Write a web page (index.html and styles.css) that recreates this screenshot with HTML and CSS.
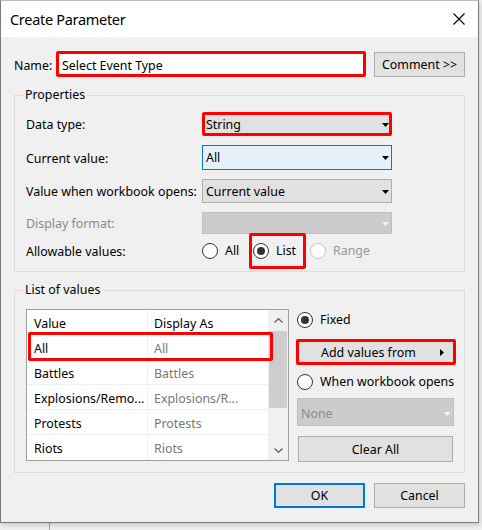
FILE: index.html
```html
<!DOCTYPE html>
<html>
<head>
<meta charset="utf-8">
<link rel="stylesheet" href="styles.css">
</head>
<body>
<div class="window">
  <div class="titlebar">
    <span class="title">Create Parameter</span>
    <svg class="close" width="12" height="12" viewBox="0 0 12 12"><path d="M0.5 0.5 L11.5 11.5 M11.5 0.5 L0.5 11.5" stroke="#000" stroke-width="1.1" fill="none"/></svg>
  </div>
  <div class="body">
    <div class="name-row">
      <span class="name-label">Name:</span>
      <div class="name-input">Select Event Type</div>
      <button class="btn comment">Comment &gt;&gt;</button>
    </div>

    <fieldset class="group props">
      <legend>Properties</legend>
      <div class="prop-grid">
        <span>Data type:</span>
        <div class="select hl"><span>String</span><svg class="arrow" width="7" height="4" viewBox="0 0 7 4"><path d="M0 0 H7 L3.5 4 Z" fill="#000"/></svg></div>

        <span>Current value:</span>
        <div class="select focus"><span>All</span><svg class="arrow" width="7" height="4" viewBox="0 0 7 4"><path d="M0 0 H7 L3.5 4 Z" fill="#000"/></svg></div>

        <span>Value when workbook opens:</span>
        <div class="select"><span>Current value</span><svg class="arrow" width="7" height="4" viewBox="0 0 7 4"><path d="M0 0 H7 L3.5 4 Z" fill="#000"/></svg></div>

        <span class="disabled-text">Display format:</span>
        <div class="select disabled"><span></span><svg class="arrow" width="7" height="4" viewBox="0 0 7 4"><path d="M0 0 H7 L3.5 4 Z" fill="#f4f4f4"/></svg></div>

        <span>Allowable values:</span>
        <div class="radios">
          <label class="radio r-all"><span class="circle"></span>All</label>
          <label class="radio r-list"><span class="circle checked"></span>List</label>
          <label class="radio disabled"><span class="circle"></span>Range</label>
        </div>
      </div>
    </fieldset>

    <fieldset class="group listgroup">
      <legend>List of values</legend>
      <div class="list-layout">
        <div class="table">
          <div class="cols">
            <div class="cell c1">Value</div><div class="cell c2 head">Display As</div>
            <div class="cell c1">All</div><div class="cell c2">All</div>
            <div class="cell c1">Battles</div><div class="cell c2">Battles</div>
            <div class="cell c1">Explosions/Remo...</div><div class="cell c2">Explosions/R...</div>
            <div class="cell c1">Protests</div><div class="cell c2">Protests</div>
            <div class="cell c1 last">Riots</div><div class="cell c2 last">Riots</div>
          </div>
          <div class="scrollbar">
            <div class="sb-btn"><svg width="9" height="5" viewBox="0 0 9 5"><path d="M0.5 4.5 L4.5 0.7 L8.5 4.5" stroke="#606060" stroke-width="1.3" fill="none"/></svg></div>
            <div class="sb-track"><div class="thumb"></div></div>
            <div class="sb-btn"><svg width="9" height="5" viewBox="0 0 9 5"><path d="M0.5 0.5 L4.5 4.3 L8.5 0.5" stroke="#606060" stroke-width="1.3" fill="none"/></svg></div>
          </div>
          <div class="row-hl"></div>
        </div>

        <div class="side">
          <label class="radio fixed"><span class="circle checked"></span>Fixed</label>
          <button class="btn add"><span>Add values from</span><svg width="4" height="7" viewBox="0 0 4 7"><path d="M0 0 L4 3.5 L0 7 Z" fill="#000"/></svg></button>
          <label class="radio wwo"><span class="circle"></span>When workbook opens</label>
          <div class="select disabled none"><span>None</span><svg class="arrow" width="7" height="4" viewBox="0 0 7 4"><path d="M0 0 H7 L3.5 4 Z" fill="#f4f4f4"/></svg></div>
          <button class="btn clear">Clear All</button>
        </div>
      </div>
    </fieldset>

    <div class="footer">
      <button class="btn ok">OK</button>
      <button class="btn">Cancel</button>
    </div>
  </div>
</div>
</body>
</html>
```

FILE: styles.css
```css
*, *::before, *::after { box-sizing: border-box; }
html, body { margin: 0; padding: 0; }
body {
  width: 482px;
  height: 530px;
  overflow: hidden;
  background: linear-gradient(#a8a8a8, #a8a8a8) no-repeat 49px 0 / 1px 100%, #f0f0f0;
  font-family: "Noto Sans", "Open Sans", sans-serif;
  font-size: 12.4px;
  color: #000;
}
.window {
  width: 479px;
  height: 523px;
  border: 1px solid #7a7a7a;
  border-top-color: #bdbdbd;
  background: #f0f0f0;
  display: flex;
  flex-direction: column;
  box-shadow: 1px 2px 5px rgba(0,0,0,0.18);
}
.titlebar {
  flex: none;
  height: 36px;
  background: #fff;
  display: flex;
  align-items: center;
  justify-content: space-between;
  padding: 0 13px 0 9px;
}
.title { font-size: 14.5px; letter-spacing: -0.3px; line-height: 20px; }
.close { display: block; }

.body {
  padding: 14px 13px 0 13px;
  display: flex;
  flex-direction: column;
}

.name-row { display: flex; align-items: center; height: 26px; }
.name-label { width: 42px; padding-top: 2px; }
.name-input {
  width: 310px;
  height: 26px;
  border: 3px solid #ff0000;
  border-radius: 2px;
  background: #fff;
  padding: 2px 0 0 3px;
  line-height: 20px;
}
.btn {
  background: #e1e1e1;
  border: 1px solid #adadad;
  font: inherit;
  color: #000;
  padding: 1px 0 0;
  height: 25px;
  width: 91px;
  line-height: 22px;
}
.comment { margin-left: 8px; }

fieldset.group {
  margin: 10px 0 0;
  padding: 0 11px;
  border: 1px solid #dcdcdc;
  min-width: 0;
}
legend {
  padding: 0 2px;
  margin-left: -3px;
  line-height: 16px;
}

.prop-grid {
  display: grid;
  grid-template-columns: 176px 190px;
  grid-template-rows: 24px 25px 24px 22px 16px;
  row-gap: 9px;
  align-items: center;
  padding: 9px 0 12px;
}
.prop-grid > span { padding-top: 1px; }
.disabled-text { color: #8a8a8a; }

.select {
  height: 25px;
  border: 1px solid #adadad;
  background: #e1e1e1;
  display: flex;
  align-items: center;
  justify-content: space-between;
  padding: 1px 2px 0 3px;
  line-height: 20px;
}
.prop-grid .select { height: 100%; }
.select .arrow { display: block; }
.select.hl { border: 3px solid #ff0000; border-radius: 2px; padding: 1px 0 0 1px; }
.select.focus { border-color: #0078d7; background: #e5f1fb; }
.select.disabled { background: #cccccc; border-color: #bfbfbf; color: #8a8a8a; }

.radios { display: flex; align-items: center; }
.radio { display: flex; align-items: center; gap: 7px; line-height: 16px; }
.circle {
  width: 16px;
  height: 16px;
  border-radius: 50%;
  border: 1px solid #333;
  background: #fff;
  display: flex;
  align-items: center;
  justify-content: center;
  flex: none;
}
.circle.checked::before {
  content: "";
  width: 8px;
  height: 8px;
  border-radius: 50%;
  background: #333;
}
.radio.disabled { color: #9a9a9a; }
.radio.disabled .circle { border-color: #c4c4c4; }
.r-all { width: 51px; }
.r-list { width: 57px; position: relative; }
.r-list::after {
  content: "";
  position: absolute;
  left: -4px;
  top: -10px;
  width: 57px;
  height: 36px;
  border: 3px solid #ff0000;
  border-radius: 2px;
}

.list-layout { display: flex; gap: 8px; padding: 11px 0 10px; }
.table {
  position: relative;
  width: 263px;
  height: 152px;
  border: 1px solid #a0a0a0;
  background: #fff;
  display: flex;
  flex: none;
}
.cols {
  display: grid;
  grid-template-columns: 121px 120px;
  grid-auto-rows: 25px;
}
.cell {
  border-bottom: 1px solid #f0f0f0;
  padding-top: 3px;
  line-height: 21px;
  white-space: nowrap;
  overflow: hidden;
}
.c1 { padding-left: 7px; border-right: 1px solid #f0f0f0; }
.c2 { padding-left: 6px; color: #777; }
.c2.head { color: #000; }
.cell.last { border-bottom: none; }

.scrollbar {
  width: 20px;
  background: #f0f0f0;
  display: flex;
  flex-direction: column;
}
.sb-btn { height: 20px; display: flex; align-items: center; justify-content: center; flex: none; }
.sb-btn svg { display: block; }
.sb-track { flex: 1; padding: 1px 1px 0; }
.thumb { height: 77px; background: #cdcdcd; }

.row-hl {
  position: absolute;
  left: 1px;
  top: 22px;
  width: 245px;
  height: 29px;
  border: 3px solid #ff0000;
  border-radius: 2px;
}

.side { width: 159px; display: flex; flex-direction: column; }
.side .radio { padding-top: 1px; }
.side .fixed { margin-top: 2px; }
.side .add {
  margin-top: 11px;
  margin-left: -1px;
  width: 160px;
  height: 26px;
  border: 3px solid #ff0000;
  border-radius: 2px;
  display: flex;
  align-items: center;
  justify-content: space-between;
  padding: 1px 9px 0 22px;
  line-height: 20px;
}
.side .add svg { display: block; }
.side .wwo { margin-top: 8px; }
.side .none { margin-top: 8px; width: 157px; height: 28px; padding-top: 3px; }
.side .clear { margin-top: 10px; margin-left: 1px; width: 155px; height: 26px; }

.footer {
  display: flex;
  justify-content: flex-end;
  gap: 9px;
  margin-top: 10px;
}
.btn.ok { border: 2px solid #0078d7; line-height: 20px; }
```
